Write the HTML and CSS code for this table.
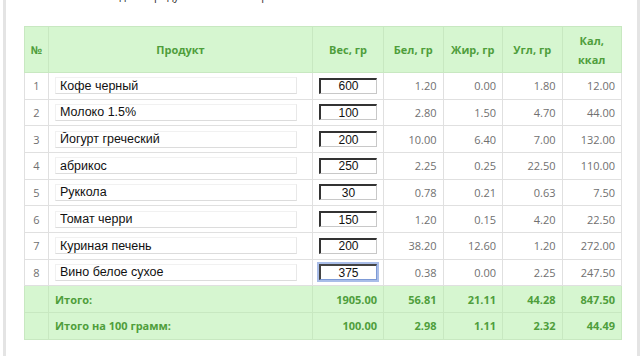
FILE: index.html
```html
<!DOCTYPE html>
<html lang="ru">
<head>
<meta charset="utf-8">
<link rel="stylesheet" href="styles.css">
</head>
<body>
<div class="card">
  <p class="intro">Введите продукты и их вес в граммах</p>
  <table class="calc">
    <colgroup>
      <col class="c-num"><col class="c-prod"><col class="c-w"><col class="c-n"><col class="c-n"><col class="c-n"><col class="c-n">
    </colgroup>
    <thead>
      <tr><th>№</th><th>Продукт</th><th>Вес, гр</th><th>Бел, гр</th><th>Жир, гр</th><th>Угл, гр</th><th>Кал,<br>ккал</th></tr>
    </thead>
    <tbody>
      <tr><td class="idx">1</td><td class="prod"><input class="name" value="Кофе черный"></td><td class="wt"><input class="weight" value="600"></td><td>1.20</td><td>0.00</td><td>1.80</td><td>12.00</td></tr>
      <tr><td class="idx">2</td><td class="prod"><input class="name" value="Молоко 1.5%"></td><td class="wt"><input class="weight" value="100"></td><td>2.80</td><td>1.50</td><td>4.70</td><td>44.00</td></tr>
      <tr><td class="idx">3</td><td class="prod"><input class="name" value="Йогурт греческий"></td><td class="wt"><input class="weight" value="200"></td><td>10.00</td><td>6.40</td><td>7.00</td><td>132.00</td></tr>
      <tr><td class="idx">4</td><td class="prod"><input class="name" value="абрикос"></td><td class="wt"><input class="weight" value="250"></td><td>2.25</td><td>0.25</td><td>22.50</td><td>110.00</td></tr>
      <tr><td class="idx">5</td><td class="prod"><input class="name" value="Руккола"></td><td class="wt"><input class="weight" value="30"></td><td>0.78</td><td>0.21</td><td>0.63</td><td>7.50</td></tr>
      <tr><td class="idx">6</td><td class="prod"><input class="name" value="Томат черри"></td><td class="wt"><input class="weight" value="150"></td><td>1.20</td><td>0.15</td><td>4.20</td><td>22.50</td></tr>
      <tr><td class="idx">7</td><td class="prod"><input class="name" value="Куриная печень"></td><td class="wt"><input class="weight" value="200"></td><td>38.20</td><td>12.60</td><td>1.20</td><td>272.00</td></tr>
      <tr><td class="idx">8</td><td class="prod"><input class="name" value="Вино белое сухое"></td><td class="wt"><input class="weight focused" value="375"></td><td>0.38</td><td>0.00</td><td>2.25</td><td>247.50</td></tr>
    </tbody>
    <tfoot>
      <tr><td></td><td class="label">Итого:</td><td>1905.00</td><td>56.81</td><td>21.11</td><td>44.28</td><td>847.50</td></tr>
      <tr><td></td><td class="label">Итого на 100 грамм:</td><td>100.00</td><td>2.98</td><td>1.11</td><td>2.32</td><td>44.49</td></tr>
    </tfoot>
  </table>
</div>
</body>
</html>
```

FILE: styles.css
```css
html, body {
  margin: 0;
  padding: 0;
  background: #ffffff;
}

.card {
  margin-left: 3px;
  width: 637px;
  height: 356px;
  box-sizing: border-box;
  border-left: 3px solid #e4e4e4;
  border-right: 3px solid #e4e4e4;
  background: #ffffff;
  padding: 0 0 0 18px;
  overflow: hidden;
}

.intro {
  margin: -11px 0 0 76px;
  height: 14px;
  font-family: "Open Sans", sans-serif;
  font-size: 11px;
  line-height: 14px;
  color: #333;
  white-space: nowrap;
}

.calc {
  margin-top: 23px;
  width: 597px;
  border-collapse: collapse;
  table-layout: fixed;
  font-family: "Open Sans", sans-serif;
  font-size: 11px;
  color: #707070;
}

.c-num { width: 24px; }
.c-prod { width: 264px; }
.c-w { width: 71px; }
.c-n { width: 59.5px; }

.calc th {
  height: 45px;
  padding: 0 4px;
  background: #d6f6d0;
  color: #4f9e3c;
  font-weight: 700;
  font-size: 11px;
  line-height: 19px;
  text-align: center;
  border: 1px solid #c8e8c1;
}

.calc td {
  height: 26.67px;
  padding: 0 6px 0 4px;
  text-align: right;
  border: 1px solid #e0e0e0;
  box-sizing: border-box;
}

.calc td.idx {
  text-align: center;
  padding: 0;
}

.calc td.prod {
  padding: 0 15px 0 6px;
  text-align: left;
}

.calc td.wt {
  padding: 0 0 0 6px;
  text-align: left;
}

.name {
  display: block;
  width: 100%;
  height: 17px;
  box-sizing: border-box;
  margin: 0;
  padding: 0 4px;
  border: 1px solid #f1f1f1;
  border-bottom-color: #dcdcdc;
  border-right-color: #e8e8e8;
  background: #fff;
  font-family: "Liberation Sans", Arial, sans-serif;
  font-size: 12.5px;
  color: #111;
  outline: none;
}

.weight {
  display: block;
  width: 58px;
  height: 16px;
  box-sizing: border-box;
  margin: 0;
  padding: 0;
  border-style: solid;
  border-width: 2px 1px 1px 2px;
  border-color: #333 #c8c8c8 #c8c8c8 #333;
  background: #fff;
  text-align: center;
  font-family: "Liberation Sans", Arial, sans-serif;
  font-size: 12px;
  color: #111;
  outline: none;
}

.weight.focused {
  border-color: #444 #7d9ad6 #7d9ad6 #444;
  box-shadow: 0 0 0 2px #a9bde8;
}

.calc tfoot td {
  background: #d6f6d0;
  color: #4f9e3c;
  font-weight: 700;
  border-color: #c8e8c1;
}

.calc tfoot td.label {
  text-align: left;
  padding-left: 6px;
}
```
